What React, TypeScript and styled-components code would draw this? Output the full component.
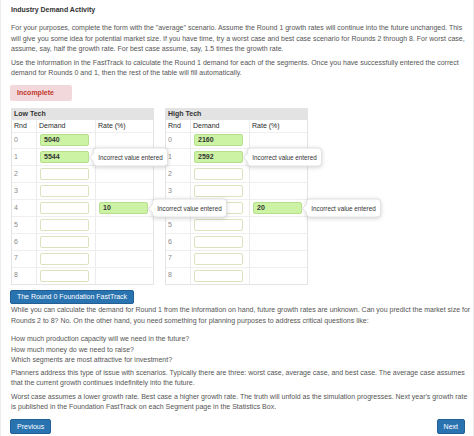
import React from "react";
import styled, { createGlobalStyle } from "styled-components";

const GlobalStyle = createGlobalStyle`
  html, body { margin: 0; padding: 0; background: #fff; }
  body { font-family: "Liberation Sans", Arial, sans-serif; color: #555; }
`;

const Page = styled.div`
  box-sizing: border-box;
  width: 474px;
  height: 436px;
  padding: 5px 3px 0 10px;
  border-left: 1px solid #ececec;
  border-right: 1px solid #ececec;
  font-size: 7px;
  line-height: 10.5px;
  overflow: hidden;
`;

const Title = styled.div`
  font-weight: bold;
  color: #333;
  font-size: 7px;
  line-height: 10px;
  margin-bottom: 8px;
`;

const Para = styled.p<{ $top?: number }>`
  margin: ${(p) => p.$top ?? 3}px 0 0;
  color: #555;
  white-space: nowrap;
`;

const Badge = styled.div`
  margin: 6.5px 0 0 -1px;
  padding: 0 7px;
  width: 62px;
  box-sizing: border-box;
  height: 16px;
  line-height: 16px;
  background: #f2d8da;
  color: #c0392b;
  font-weight: bold;
  border-radius: 2px;
`;

const Tables = styled.div`
  display: flex;
  gap: 11px;
  margin-top: 7px;
`;

const Panel = styled.div`
  position: relative;
  width: 143px;
  border: 1px solid #e4e4e4;
  border-top: none;
  box-sizing: border-box;
`;

const PanelHead = styled.div`
  background: #e3e3e3;
  height: 12px;
  line-height: 12px;
  padding-left: 2px;
  font-weight: bold;
  color: #333;
`;

const Grid = styled.div`
  display: grid;
  grid-template-columns: 24px 59px 1fr;
`;

const HeadCell = styled.div`
  height: 11.5px;
  line-height: 12px;
  padding-left: 2px;
  color: #2a2a2a;
  border-left: 1px solid #ececec;
  &:first-child { border-left: none; }
`;

const Cell = styled.div<{ $first?: boolean }>`
  position: relative;
  height: 16.9px;
  display: flex;
  align-items: center;
  padding-left: ${(p) => (p.$first ? 2 : 3)}px;
  border-top: 1px solid #efefef;
  border-left: ${(p) => (p.$first ? "none" : "1px solid #ececec")};
  box-sizing: border-box;
  color: #8a8a8a;
`;

const Field = styled.div<{ $filled?: boolean }>`
  position: relative;
  width: 49px;
  height: 12px;
  box-sizing: border-box;
  border-radius: 2px;
  border: 1px solid ${(p) => (p.$filled ? "#b5df8c" : "#dbe2bd")};
  background: ${(p) => (p.$filled ? "#ccf3a3" : "#fff")};
  color: #333;
  font-weight: bold;
  padding-left: 3px;
  line-height: 10px;
`;

const Tip = styled.div`
  position: absolute;
  left: calc(100% + 5px);
  top: 50%;
  transform: translateY(-50%);
  z-index: 5;
  width: 75px;
  height: 19px;
  box-sizing: border-box;
  background: #fff;
  border: 1px solid #e2e2e2;
  border-radius: 4px;
  box-shadow: 0 1px 4px rgba(0, 0, 0, 0.18);
  font-size: 6.3px;
  line-height: 17px;
  font-weight: normal;
  color: #333;
  text-align: center;
  white-space: nowrap;

  &::before {
    content: "";
    position: absolute;
    left: -4px;
    top: 50%;
    width: 6px;
    height: 6px;
    background: #fff;
    border-left: 1px solid #e2e2e2;
    border-bottom: 1px solid #e2e2e2;
    transform: translateY(-50%) rotate(45deg);
  }
`;

const Button = styled.button`
  font-family: "Liberation Sans", Arial, sans-serif;
  font-size: 7px;
  color: #fff;
  background: #2a73b1;
  border: 1px solid #215f95;
  border-radius: 2px;
  height: 15px;
  padding: 0 6px;
  white-space: nowrap;
  cursor: pointer;
`;

const FastTrackButton = styled(Button)`
  display: block;
  width: 124px;
  height: 14px;
  padding: 0;
  text-align: center;
  margin: 5px 0 0 -1px;
`;

const Footer = styled.div`
  display: flex;
  justify-content: space-between;
  margin: 6px 5px 0 -1px;
`;

type Row = { demand?: string; rate?: string; demandTip?: boolean; rateTip?: boolean };

const lowTech: Row[] = [
  { demand: "5040" },
  { demand: "5544", demandTip: true },
  {},
  {},
  { rate: "10", rateTip: true },
  {},
  {},
  {},
  {},
];

const highTech: Row[] = [
  { demand: "2160" },
  { demand: "2592", demandTip: true },
  {},
  {},
  { rate: "20", rateTip: true },
  {},
  {},
  {},
  {},
];

const Segment = ({ name, rows }: { name: string; rows: Row[] }) => (
  <Panel>
    <PanelHead>{name}</PanelHead>
    <Grid>
      <HeadCell>Rnd</HeadCell>
      <HeadCell>Demand</HeadCell>
      <HeadCell>Rate (%)</HeadCell>
      {rows.map((r, i) => (
        <React.Fragment key={i}>
          <Cell $first>{i}</Cell>
          <Cell>
            <Field $filled={!!r.demand}>
              {r.demand}
              {r.demandTip && <Tip>Incorrect value entered</Tip>}
            </Field>
          </Cell>
          <Cell>
            {r.rate && (
              <Field $filled>
                {r.rate}
                {r.rateTip && <Tip>Incorrect value entered</Tip>}
              </Field>
            )}
          </Cell>
        </React.Fragment>
      ))}
    </Grid>
  </Panel>
);

export default function App() {
  return (
    <>
      <GlobalStyle />
      <Page>
        <Title>Industry Demand Activity</Title>
        <Para $top={0}>
          For your purposes, complete the form with the "average" scenario. Assume the Round 1 growth rates will
          continue into the future unchanged. This
          <br />
          will give you some idea for potential market size. If you have time, try a worst case and best case scenario
          for Rounds 2 through 8. For worst case,
          <br />
          assume, say, half the growth rate. For best case assume, say, 1.5 times the growth rate.
        </Para>
        <Para>
          Use the information in the FastTrack to calculate the Round 1 demand for each of the segments. Once you have
          successfully entered the correct
          <br />
          demand for Rounds 0 and 1, then the rest of the table will fill automatically.
        </Para>
        <Badge>Incomplete</Badge>
        <Tables>
          <Segment name="Low Tech" rows={lowTech} />
          <Segment name="High Tech" rows={highTech} />
        </Tables>
        <FastTrackButton>The Round 0 Foundation FastTrack</FastTrackButton>
        <Para $top={1.5}>
          While you can calculate the demand for Round 1 from the information on hand, future growth rates are
          unknown. Can you predict the market size for
          <br />
          Rounds 2 to 8? No. On the other hand, you need something for planning purposes to address critical questions
          like:
        </Para>
        <Para $top={8}>
          How much production capacity will we need in the future?
          <br />
          How much money do we need to raise?
          <br />
          Which segments are most attractive for investment?
        </Para>
        <Para $top={2}>
          Planners address this type of issue with scenarios. Typically there are three: worst case, average case, and
          best case. The average case assumes
          <br />
          that the current growth continues indefinitely into the future.
        </Para>
        <Para>
          Worst case assumes a lower growth rate. Best case a higher growth rate. The truth will unfold as the
          simulation progresses. Next year's growth rate
          <br />
          is published in the Foundation FastTrack on each Segment page in the Statistics Box.
        </Para>
        <Footer>
          <Button>Previous</Button>
          <Button>Next</Button>
        </Footer>
      </Page>
    </>
  );
}
